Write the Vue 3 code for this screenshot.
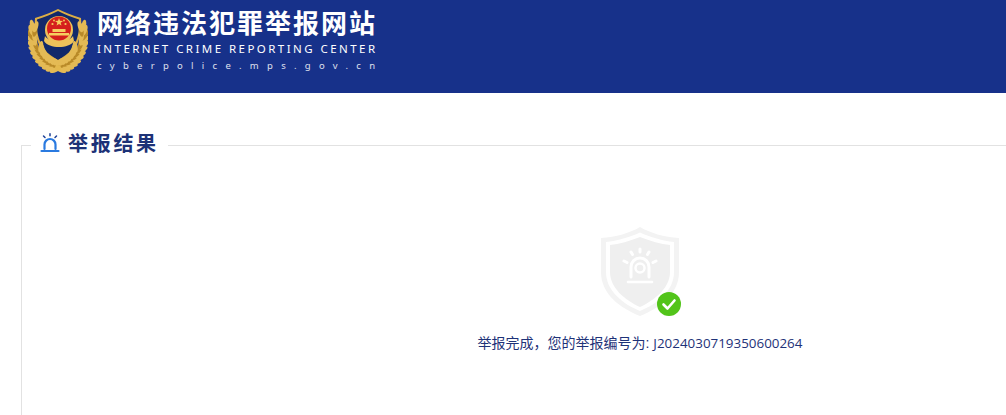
<template>
  <div class="page">
    <header class="header">
      <svg class="emblem" viewBox="0 0 60 64" aria-hidden="true">
        <path d="M30 0 C36 3 43 6 53 9 C54 20 52 32 46 41 C42 47 36 51 30 54 C24 51 18 47 14 41 C8 32 6 20 7 9 C17 6 24 3 30 0Z" fill="#dcae45" />
        <path d="M30 2 C36 5 43 8 51 10.500 C52 20 50 31 44 40 C40 45 35 48 30 51 C25 48 20 45 16 40 C10 31 8 20 9 10.500 C17 8 24 5 30 2Z" fill="#12296a" />
        <circle cx="31" cy="21" r="14" fill="#edc258" />
        <circle cx="31" cy="19.500" r="12" fill="#d5201d" />
        <g fill="#f5cf5f">
          <path d="M31 9 l1 2.800 3 .1 -2.400 1.800 .9 2.900 -2.500 -1.700 -2.500 1.700 .9 -2.900 -2.400 -1.800 3 -.1z" />
          <circle cx="24.500" cy="15" r="1.100" />
          <circle cx="37.500" cy="15" r="1.100" />
          <circle cx="26" cy="11.500" r=".9" />
          <circle cx="36" cy="11.500" r=".9" />
          <path d="M21 24 H41 V26.500 H21Z M24.500 20 H37.500 V23 H24.500Z" />
        </g>
        <path d="M17 27 C21 34 41 34 45 27 L46 32 C41 40 21 40 16 32Z" fill="#eec25a" />
        <g v-for="side in sides" :key="side" :transform="side">
          <ellipse
            v-for="(l, i) in leaves"
            :key="i"
            :cx="l.x"
            :cy="l.y"
            rx="5.800"
            ry="2.400"
            :transform="`rotate(${l.r} ${l.x} ${l.y})`"
            :fill="i % 3 === 1 ? '#b98a28' : '#e4ba55'"
          />
        </g>
        <circle cx="30" cy="59" r="3" fill="#e3b84e" />
      </svg>
      <div class="brand">
        <h1>网络违法犯罪举报网站</h1>
        <p class="en">INTERNET CRIME REPORTING CENTER</p>
        <p class="url">cyberpolice.mps.gov.cn</p>
      </div>
    </header>

    <fieldset class="result">
      <legend>
        <svg class="alarm" viewBox="0 0 20 20" aria-hidden="true">
          <g fill="none" stroke-linecap="round">
            <path d="M4.500 16 V11.500 a5.500 5.500 0 0 1 11 0 V16" stroke="#2a7ae0" stroke-width="2.200" />
            <path d="M1.500 18 H18.500" stroke="#2a7ae0" stroke-width="2.200" />
            <path d="M10 .8 V2.800 M3.500 3 L5 4.500 M16.500 3 L15 4.500" stroke="#1c3f96" stroke-width="1.500" />
          </g>
        </svg>
        <span>举报结果</span>
      </legend>

      <div class="done">
        <div class="shield-box">
          <svg class="shield" viewBox="0 0 80 90" aria-hidden="true">
            <path d="M40 1 C50 7 64 11 79 12 V46 C79 68 60 82 40 90 C20 82 1 68 1 46 V12 C16 11 30 7 40 1Z" fill="#f3f3f3" />
            <path d="M40 6.500 C50 11 63 15 74 16 V46 C74 65 57 78 40 85 C23 78 6 65 6 46 V16 C17 15 30 11 40 6.500Z" fill="#fff" />
            <path d="M40 11 C50 15 61 18 70 19 V46 C70 62 55 74 40 81 C25 74 10 62 10 46 V19 C19 18 30 15 40 11Z" fill="#efefef" />
            <g fill="none" stroke="#fff" stroke-linecap="round">
              <path d="M31 51 V41 a9 9 0 0 1 18 0 V51" stroke-width="3" />
              <circle cx="40" cy="42" r="4.500" stroke-width="2.500" />
              <path d="M28 56 H52" stroke-width="2.600" />
              <path d="M40 23 V26 M31 26 L32.500 28.500 M49 26 L47.500 28.500 M24 35 L27 36.500 M56 35 L53 36.500" stroke-width="3" />
            </g>
          </svg>
          <svg class="check" viewBox="0 0 24 24" aria-hidden="true">
            <circle cx="12" cy="12" r="12" fill="#52c41a" />
            <path d="M6.500 12.500 L10.500 16.500 L17.500 8.500" fill="none" stroke="#fff" stroke-width="2.600" stroke-linecap="round" stroke-linejoin="round" />
          </svg>
        </div>
        <p class="msg">举报完成，您的举报编号为: <span class="no">{{ reportNo }}</span></p>
      </div>
    </fieldset>
  </div>
</template>

<script setup>
const reportNo = 'J2024030719350600264'

// the wreath is drawn once and mirrored for the right side
const sides = ['', 'translate(60 0) scale(-1 1)']
const leaves = []
for (let i = 0; i < 13; i++) {
  const deg = 96 + i * 8.500
  const a = (deg * Math.PI) / 180
  leaves.push({ x: 30 + 27 * Math.cos(a), y: 27 + 34 * Math.sin(a), r: deg + 60 })
  leaves.push({ x: 30 + 23.500 * Math.cos(a), y: 27 + 30 * Math.sin(a), r: deg + 90 })
  if (i < 8) leaves.push({ x: 30 + 19 * Math.cos(a), y: 27 + 26 * Math.sin(a), r: deg + 125 })
}
</script>

<style>
html,
body {
  margin: 0;
  background: #fff;
  overflow: hidden;
}
</style>

<style scoped>
.page {
  width: 1006px;
  height: 415px;
  overflow: hidden;
  font-family: "Liberation Sans", "Noto Sans CJK SC", sans-serif;
}

.header {
  display: flex;
  align-items: flex-start;
  height: 93px;
  padding: 9px 0 0 28px;
  box-sizing: border-box;
  background: #17318a;
  color: #fff;
}

.emblem {
  width: 60px;
  height: 64px;
  flex: none;
}

.brand {
  margin-left: 9px;
  width: 290px;
}

.brand h1 {
  margin: 0;
  font-size: 26px;
  line-height: 30px;
  font-weight: 700;
  letter-spacing: 2px;
  white-space: nowrap;
}

.en {
  margin: 2px 0 0;
  font-family: "Noto Sans", sans-serif;
  font-size: 11.500px;
  line-height: 16px;
  letter-spacing: 2.450px;
  white-space: nowrap;
}

.url {
  margin: 2px 0 0;
  font-family: "Noto Sans", sans-serif;
  font-size: 9.500px;
  line-height: 13px;
  letter-spacing: 8.280px;
  opacity: .85;
  white-space: nowrap;
}

.result {
  margin: 38px 0 0 21px;
  padding: 0;
  width: 1238px;
  min-width: 1238px;
  height: 300px;
  box-sizing: border-box;
  border: 1px solid #e2e2e2;
}

.result legend {
  display: flex;
  align-items: center;
  box-sizing: border-box;
  margin-left: 9px;
  padding: 0 9px 5px 9px;
  height: 28px;
}

.alarm {
  width: 20px;
  height: 20px;
  flex: none;
}

.result legend span {
  margin-left: 8px;
  font-size: 20px;
  font-weight: 700;
  letter-spacing: 2.700px;
  color: #1d3277;
}

.done {
  display: flex;
  flex-direction: column;
  align-items: center;
  padding-top: 67px;
}

.shield-box {
  position: relative;
  width: 80px;
  height: 90px;
}

.shield {
  display: block;
  width: 80px;
  height: 90px;
}

.check {
  position: absolute;
  right: -1px;
  bottom: 0;
  width: 24px;
  height: 24px;
}

.msg {
  margin: 18px 0 0;
  font-size: 14px;
  line-height: 18px;
  color: #1e3278;
  white-space: nowrap;
}

.no {
  font-family: "Open Sans", sans-serif;
  font-size: 13.400px;
}
</style>
